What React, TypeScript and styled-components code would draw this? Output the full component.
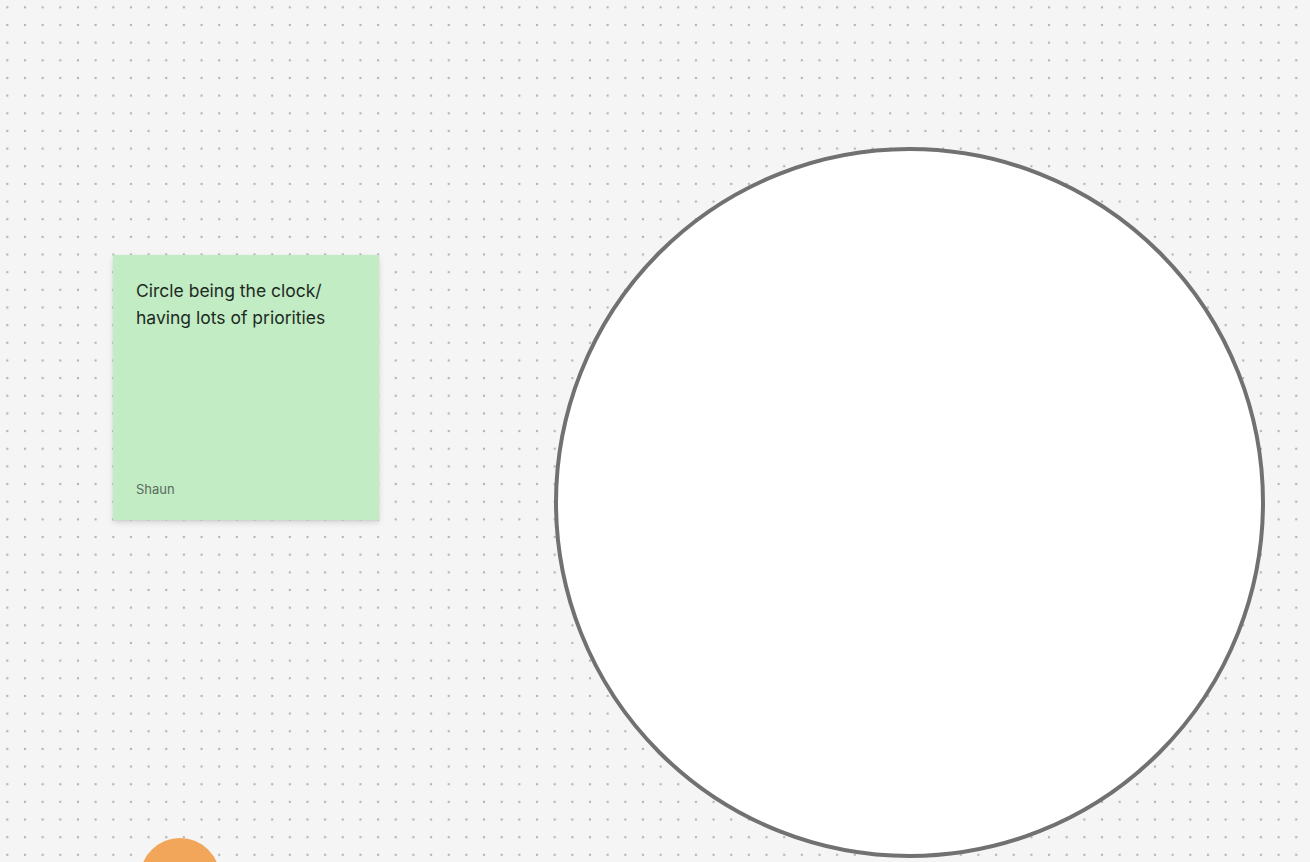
import React from "react";
import styled, { createGlobalStyle } from "styled-components";

const GlobalStyle = createGlobalStyle`
  html, body {
    margin: 0;
    padding: 0;
    height: 100%;
    overflow: hidden;
  }
  body {
    font-family: Inter, "Noto Sans", "Liberation Sans", sans-serif;
  }
`;

const Canvas = styled.main`
  position: relative;
  width: 1310px;
  height: 862px;
  overflow: hidden;
  background-color: #f5f5f5;
  background-image: radial-gradient(circle, #b4b4b4 0, #b4b4b4 1px, transparent 1.6px);
  background-size: 17.67px 17.67px;
  background-position: -1.5px -1.5px;
`;

const StickyNote = styled.div<{ $x: number; $y: number; $color: string }>`
  position: absolute;
  left: ${(p) => p.$x}px;
  top: ${(p) => p.$y}px;
  width: 266px;
  height: 265px;
  box-sizing: border-box;
  padding: 23px 23px 22px;
  background: ${(p) => p.$color};
  box-shadow: 0 3px 6px rgba(0, 0, 0, 0.12), 0 1px 2px rgba(0, 0, 0, 0.06);
  display: flex;
  flex-direction: column;
  justify-content: space-between;
`;

const NoteText = styled.p`
  margin: 0;
  font-size: 17.5px;
  line-height: 26.5px;
  color: #1e2a1f;
`;

const NoteAuthor = styled.span`
  font-size: 13px;
  line-height: 18px;
  color: #5c6b5d;
`;

const Shape = styled.div<{ $x: number; $y: number; $size: number; $fill: string; $stroke?: string }>`
  position: absolute;
  left: ${(p) => p.$x}px;
  top: ${(p) => p.$y}px;
  width: ${(p) => p.$size}px;
  height: ${(p) => p.$size}px;
  box-sizing: border-box;
  border-radius: 50%;
  background: ${(p) => p.$fill};
  border: ${(p) => (p.$stroke ? `4px solid ${p.$stroke}` : "none")};
`;

export default function App() {
  return (
    <>
      <GlobalStyle />
      <Canvas>
        <StickyNote $x={113} $y={255} $color="#c1ecc4">
          <NoteText>
            Circle being the clock/
            <br />
            having lots of priorities
          </NoteText>
          <NoteAuthor>Shaun</NoteAuthor>
        </StickyNote>
        <Shape $x={554} $y={147} $size={711} $fill="#ffffff" $stroke="#717171" />
        <Shape $x={140} $y={838} $size={80} $fill="#f2a65a" />
      </Canvas>
    </>
  );
}
